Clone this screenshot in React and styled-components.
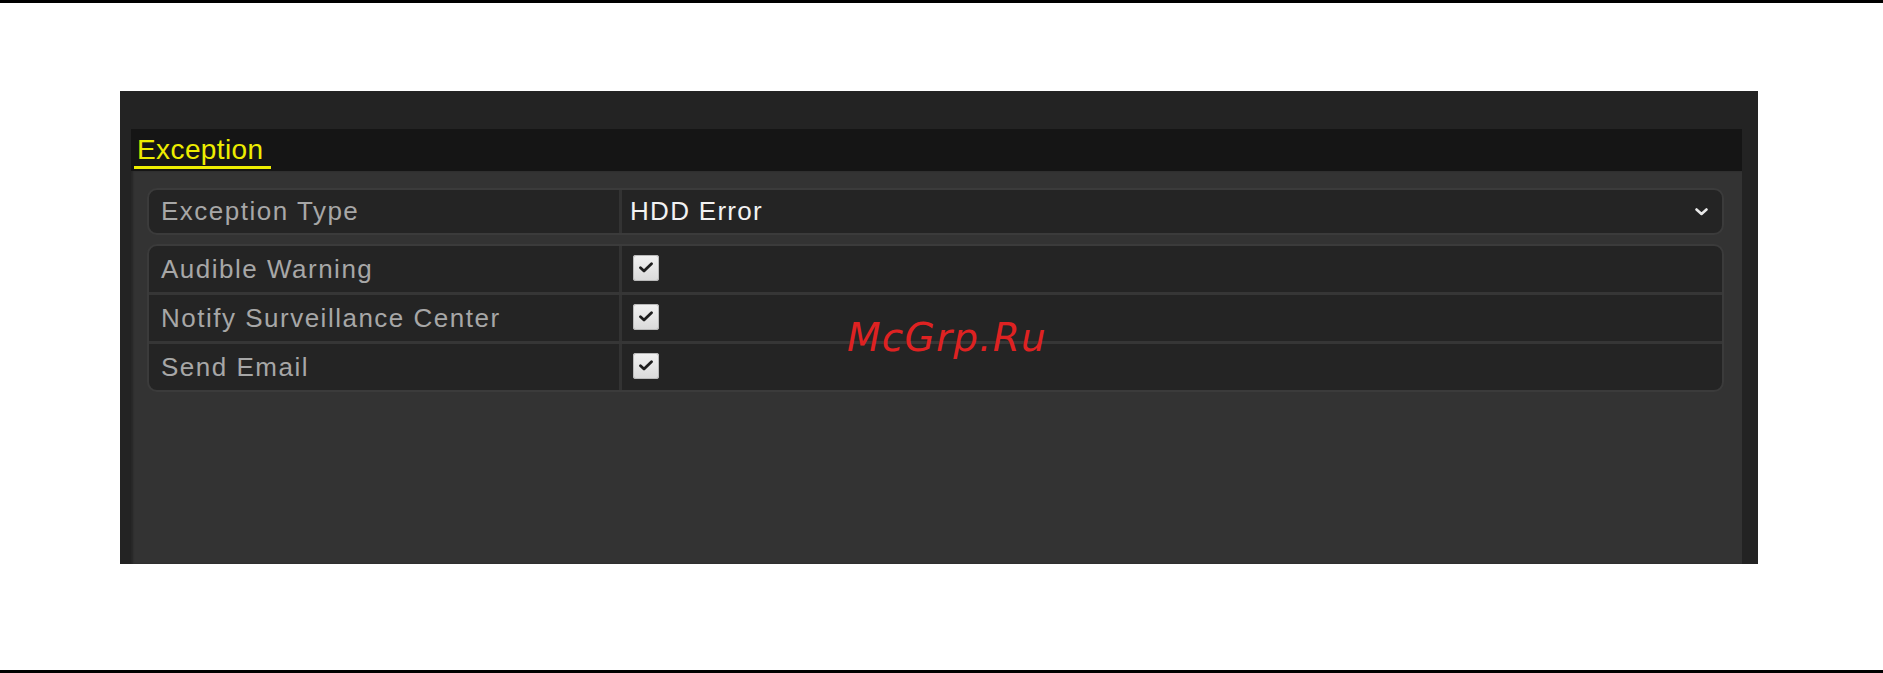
import React from "react";
import styled, { createGlobalStyle } from "styled-components";

const GlobalStyle = createGlobalStyle`
  html, body {
    margin: 0;
    padding: 0;
    background: #ffffff;
  }
`;

const Page = styled.div`
  position: relative;
  height: 673px;
  overflow: hidden;
  display: flex;
  flex-direction: column;
  font-family: "Liberation Sans", Arial, sans-serif;
`;

const Rule = styled.div`
  height: 3px;
  background: #000000;
  flex: none;
`;

const Stage = styled.div`
  flex: 1;
  padding: 88px 125px 0 120px;
`;

const Panel = styled.section`
  height: 473px;
  background: #232323;
  padding: 38px 16px 0 11px;
  box-sizing: border-box;
  display: flex;
  flex-direction: column;
`;

const TitleBar = styled.header`
  height: 42px;
  background: #151515;
  display: flex;
  align-items: flex-end;
  padding: 0 0 2px 3px;
  box-sizing: border-box;
`;

const TitleTab = styled.span`
  color: #eded00;
  font-size: 28px;
  line-height: 28px;
  letter-spacing: 0.4px;
  padding: 0 7px 2px 3px;
  border-bottom: 3px solid #eded00;
`;

const Body = styled.div`
  flex: 1;
  background: #333333;
  box-shadow: inset 2px 0 2px rgba(0, 0, 0, 0.25);
  padding: 17px 18px 0 16px;
  display: flex;
  flex-direction: column;
  gap: 9px;
`;

const Group = styled.div`
  border: 2px solid #3b3b3b;
  border-radius: 10px;
  overflow: hidden;
  background: #242424;
`;

const Row = styled.div`
  display: grid;
  grid-template-columns: 473px 1fr;
  height: ${(p) => p.$h}px;

  & + & {
    border-top: 3px solid #363636;
  }
`;

const Label = styled.div`
  display: flex;
  align-items: center;
  padding-left: 12px;
  border-right: 3px solid #333333;
  color: #a7a7a7;
  font-size: 26px;
  letter-spacing: 1.5px;
  white-space: nowrap;
`;

const Value = styled.div`
  display: flex;
  align-items: center;
  justify-content: space-between;
  padding: 0 14px 0 8px;
  color: #f2f2f2;
  font-size: 26px;
  letter-spacing: 1.3px;
`;

const CheckBox = styled.span`
  width: 26px;
  height: 26px;
  margin: -3px 0 0 3px;
  border-radius: 3px;
  background: linear-gradient(#f2f2f2, #d9d9d9);
  box-shadow: inset 0 0 0 1px #b9b9b9;
  display: flex;
  align-items: center;
  justify-content: center;
`;

const Watermark = styled.div`
  position: absolute;
  left: 847px;
  top: 318px;
  font-family: "DejaVu Sans", sans-serif;
  font-style: italic;
  font-size: 39px;
  line-height: 39px;
  letter-spacing: 1.2px;
  color: #de2222;
  pointer-events: none;
`;

const Check = () => (
  <CheckBox>
    <svg width="14" height="11" viewBox="0 0 14 11">
      <path
        d="M1.5 5.8 L5 9 L12.5 1.8"
        fill="none"
        stroke="#1e1e1e"
        strokeWidth="2.8"
        strokeLinecap="round"
        strokeLinejoin="round"
      />
    </svg>
  </CheckBox>
);

const Chevron = () => (
  <svg width="13" height="8" viewBox="0 0 13 8">
    <path
      d="M1.5 1.5 L6.5 6 L11.5 1.5"
      fill="none"
      stroke="#e8e8e8"
      strokeWidth="2.6"
      strokeLinecap="round"
      strokeLinejoin="round"
    />
  </svg>
);

const options = ["Audible Warning", "Notify Surveillance Center", "Send Email"];

const App = () => {
  return (
    <>
      <GlobalStyle />
      <Page>
        <Rule />
        <Stage>
          <Panel>
            <TitleBar>
              <TitleTab>Exception</TitleTab>
            </TitleBar>
            <Body>
              <Group>
                <Row $h={43}>
                  <Label>Exception Type</Label>
                  <Value>
                    HDD Error
                    <Chevron />
                  </Value>
                </Row>
              </Group>
              <Group>
                {options.map((name) => (
                  <Row key={name} $h={46}>
                    <Label>{name}</Label>
                    <Value>
                      <Check />
                    </Value>
                  </Row>
                ))}
              </Group>
            </Body>
          </Panel>
        </Stage>
        <Rule />
        <Watermark>McGrp.Ru</Watermark>
      </Page>
    </>
  );
};

export default App;
